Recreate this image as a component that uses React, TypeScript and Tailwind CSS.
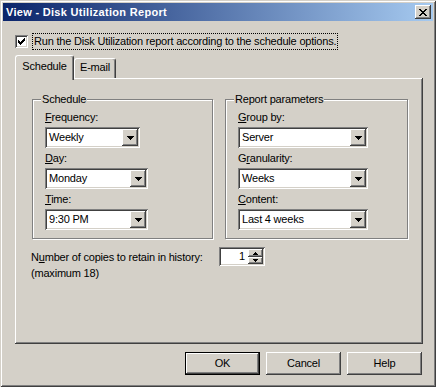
import React from "react";

const raised =
  "shadow-[inset_-1px_-1px_#404040,inset_1px_1px_#ffffff,inset_-2px_-2px_#808080,inset_2px_2px_#d4d0c8]";
const sunken =
  "shadow-[inset_1px_1px_#808080,inset_-1px_-1px_#ffffff,inset_2px_2px_#404040,inset_-2px_-2px_#d4d0c8]";
const etched = "border border-[#808080] shadow-[inset_1px_1px_#ffffff,1px_1px_#ffffff]";

function DownArrow() {
  return (
    <svg width="7" height="4" viewBox="0 0 7 4" shapeRendering="crispEdges">
      <rect x="0" y="0" width="7" height="1" fill="#000" />
      <rect x="1" y="1" width="5" height="1" fill="#000" />
      <rect x="2" y="2" width="3" height="1" fill="#000" />
      <rect x="3" y="3" width="1" height="1" fill="#000" />
    </svg>
  );
}

function Combo({ value, className }: { value: string; className: string }) {
  return (
    <div className={`flex h-[21px] items-center bg-white p-[2px] ${sunken} ${className}`}>
      <span className="flex-1 pl-[2px] leading-[13px] whitespace-nowrap">{value}</span>
      <div className={`flex h-[17px] w-[16px] items-center justify-center bg-[#d4d0c8] pt-[1px] ${raised}`}>
        <DownArrow />
      </div>
    </div>
  );
}

function Field({
  label,
  ul,
  rest,
  value,
  className,
  pre,
}: {
  label?: string;
  pre?: string;
  ul: string;
  rest: string;
  value: string;
  className: string;
}) {
  return (
    <div className="flex flex-col">
      <div className="mb-[3px] leading-[13px] whitespace-nowrap">
        {pre}
        <span className="underline underline-offset-[1px]">{ul}</span>
        {rest}
        {label}
      </div>
      <Combo value={value} className={className} />
    </div>
  );
}

function Group({ title, children, className }: { title: string; children: React.ReactNode; className: string }) {
  return (
    <div className={`relative h-[140px] ${etched} ${className}`}>
      <span className="absolute left-[8px] top-[-7px] bg-[#d4d0c8] px-[1px] leading-[13px] whitespace-nowrap">
        {title}
      </span>
      <div className="flex flex-col gap-[4px] pl-[12px] pt-[11px]">{children}</div>
    </div>
  );
}

function Button({ label, isDefault }: { label: string; isDefault?: boolean }) {
  return (
    <div
      className={`flex h-[23px] w-[75px] items-center justify-center bg-[#d4d0c8] leading-[13px] ${
        isDefault
          ? "shadow-[inset_0_0_0_1px_#000000,inset_-2px_-2px_#404040,inset_2px_2px_#ffffff,inset_-3px_-3px_#808080]"
          : raised
      }`}
    >
      {label}
    </div>
  );
}

export default function App() {
  return (
    <div
      className={`flex h-[387px] w-[436px] flex-col bg-[#d4d0c8] p-[3px] font-['Liberation_Sans',Arial,sans-serif] text-[11px] tracking-[-0.2px] text-black shadow-[inset_1px_1px_#d4d0c8,inset_-1px_-1px_#404040,inset_2px_2px_#ffffff,inset_-2px_-2px_#808080]`}
    >
      {/* Title bar */}
      <div className="flex h-[18px] items-center justify-between bg-[linear-gradient(to_right,#0a246a,#a6caf0)] pl-[3px] pr-[2px]">
        <span className="text-[11px] font-bold leading-[18px] tracking-[0.3px] text-white">
          View - Disk Utilization Report
        </span>
        <div className={`flex h-[14px] w-[16px] items-center justify-center bg-[#d4d0c8] ${raised}`}>
          <svg width="8" height="7" viewBox="0 0 8 7" shapeRendering="crispEdges">
            <rect x="0" y="0" width="2" height="1" />
            <rect x="6" y="0" width="2" height="1" />
            <rect x="1" y="1" width="2" height="1" />
            <rect x="5" y="1" width="2" height="1" />
            <rect x="2" y="2" width="4" height="1" />
            <rect x="3" y="3" width="2" height="1" />
            <rect x="2" y="4" width="4" height="1" />
            <rect x="1" y="5" width="2" height="1" />
            <rect x="5" y="5" width="2" height="1" />
            <rect x="0" y="6" width="2" height="1" />
            <rect x="6" y="6" width="2" height="1" />
          </svg>
        </div>
      </div>

      <div className="flex flex-col pl-[12px] pr-[10px]">
        {/* Checkbox row */}
        <div className="mt-[12px] flex h-[17px] items-center">
          <div className={`flex h-[13px] w-[13px] items-center justify-center bg-white ${sunken}`}>
            <svg width="7" height="7" viewBox="0 0 7 7" shapeRendering="crispEdges">
              <rect x="6" y="0" width="1" height="1" />
              <rect x="5" y="1" width="2" height="1" />
              <rect x="0" y="2" width="1" height="1" />
              <rect x="4" y="2" width="3" height="1" />
              <rect x="0" y="3" width="2" height="1" />
              <rect x="3" y="3" width="3" height="1" />
              <rect x="0" y="4" width="5" height="1" />
              <rect x="1" y="5" width="3" height="1" />
              <rect x="2" y="6" width="1" height="1" />
            </svg>
          </div>
          <div className="ml-[4px] h-[17px] border border-dotted border-black px-[1px] leading-[15px] whitespace-nowrap">
            Run the Disk Utilization report according to the schedule options.
          </div>
        </div>

        {/* Tabs */}
        <div className="mt-[5px] flex h-[23px] items-end">
          <div className="relative z-10 -mb-[2px] h-[25px] w-[59px] rounded-t-[3px] border-l border-t border-r border-white border-r-[#404040] bg-[#d4d0c8] pt-[4px] text-center leading-[13px] shadow-[inset_-1px_0_#808080]">
            Schedule
          </div>
          <div className="h-[20px] w-[42px] rounded-t-[3px] border-l border-t border-r border-white border-r-[#404040] bg-[#d4d0c8] pt-[2px] text-center leading-[13px] shadow-[inset_-1px_0_#808080]">
            E-mail
          </div>
        </div>

        {/* Panel */}
        <div className={`flex h-[266px] w-[408px] flex-col pl-[17px] pt-[21px] ${raised}`}>
          <div className="flex gap-[12px]">
            <Group title="Schedule" className="w-[181px]">
              <Field ul="F" rest="requency:" value="Weekly" className="w-[95px]" />
              <Field ul="D" rest="ay:" value="Monday" className="w-[103px]" />
              <Field ul="T" rest="ime:" value="9:30 PM" className="w-[103px]" />
            </Group>
            <Group title="Report parameters" className="w-[183px]">
              <Field ul="G" rest="roup by:" value="Server" className="w-[130px]" />
              <Field pre="G" ul="r" rest="anularity:" value="Weeks" className="w-[130px]" />
              <Field ul="C" rest="ontent:" value="Last 4 weeks" className="w-[130px]" />
            </Group>
          </div>

          <div className="-ml-[1px] mt-[8px] flex items-start">
            <div className="w-[188px] pt-[2px] leading-[16px]">
              <div className="whitespace-nowrap">
                N<span className="underline underline-offset-[1px]">u</span>mber of copies to retain in history:
              </div>
              <div>(maximum 18)</div>
            </div>
            <div className={`flex h-[19px] w-[46px] bg-white p-[2px] ${sunken}`}>
              <div className="flex-1 pr-[3px] text-right leading-[15px]">1</div>
              <div className="flex w-[15px] flex-col">
                <div className={`flex h-[8px] items-center justify-center bg-[#d4d0c8] ${raised}`}>
                  <svg width="5" height="3" viewBox="0 0 5 3" shapeRendering="crispEdges">
                    <rect x="2" y="0" width="1" height="1" />
                    <rect x="1" y="1" width="3" height="1" />
                    <rect x="0" y="2" width="5" height="1" />
                  </svg>
                </div>
                <div className={`flex h-[7px] items-center justify-center bg-[#d4d0c8] ${raised}`}>
                  <svg width="5" height="3" viewBox="0 0 5 3" shapeRendering="crispEdges">
                    <rect x="0" y="0" width="5" height="1" />
                    <rect x="1" y="1" width="3" height="1" />
                    <rect x="2" y="2" width="1" height="1" />
                  </svg>
                </div>
              </div>
            </div>
          </div>
        </div>

        {/* Buttons */}
        <div className="mr-[1px] mt-[8px] flex justify-end gap-[6px]">
          <Button label="OK" isDefault />
          <Button label="Cancel" />
          <Button label="Help" />
        </div>
      </div>
    </div>
  );
}
